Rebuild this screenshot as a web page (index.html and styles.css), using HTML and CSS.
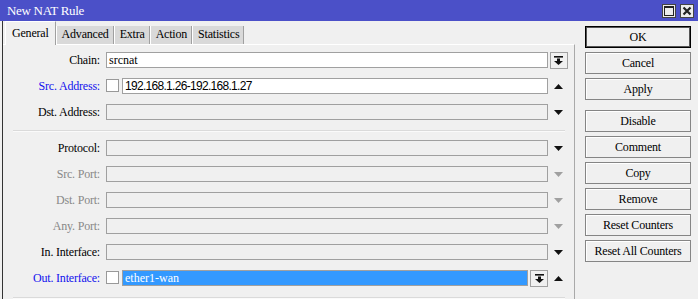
FILE: index.html
```html
<!DOCTYPE html>
<html lang="en">
<head>
  <meta charset="UTF-8" />
  <title>New NAT Rule</title>
  <link rel="stylesheet" href="styles.css">
</head>
<body>
  <div class="window">
    <div class="titlebar">
      <span class="title">New NAT Rule</span>
      <div class="win-btns">
        <span class="wbtn"><svg width="10" height="10" viewBox="0 0 10 10"><rect x="0.5" y="0.5" width="9" height="9" fill="none" stroke="#222" stroke-width="1"/><rect x="0" y="0" width="10" height="2" fill="#222"/></svg></span>
        <span class="wbtn"><svg width="10" height="10" viewBox="0 0 10 10"><path d="M1.5 1.5 L8.5 8.5 M8.5 1.5 L1.5 8.5" stroke="#222" stroke-width="2.2"/></svg></span>
      </div>
    </div>

    <div class="content">
      <div class="main">
        <div class="tabs">
          <span class="tab active">General</span>
          <span class="tab">Advanced</span>
          <span class="tab">Extra</span>
          <span class="tab">Action</span>
          <span class="tab">Statistics</span>
        </div>

        <div class="panel">
          <div class="row">
            <label class="lbl">Chain:</label>
            <div class="field"><div class="input on">srcnat</div></div>
            <div class="arrow"><span class="dd-btn big"><svg width="9" height="9" viewBox="0 0 9 9"><rect x="0" y="0" width="9" height="1.6" fill="#111"/><rect x="3" y="2.5" width="3" height="2.5" fill="#111"/><polygon points="0,5 9,5 4.5,9" fill="#111"/></svg></span></div>
          </div>
          <div class="row">
            <label class="lbl blue">Src. Address:</label>
            <div class="field"><span class="check"></span><div class="input on sans">192.168.1.26-192.168.1.27</div></div>
            <div class="arrow"><svg width="9" height="5" viewBox="0 0 9 5"><polygon points="0,5 4.5,0 9,5" fill="#111"/></svg></div>
          </div>
          <div class="row">
            <label class="lbl">Dst. Address:</label>
            <div class="field"><div class="input"></div></div>
            <div class="arrow"><svg width="9" height="5" viewBox="0 0 9 5"><polygon points="0,0 9,0 4.5,5" fill="#111"/></svg></div>
          </div>

          <div class="sep first"></div>

          <div class="row">
            <label class="lbl">Protocol:</label>
            <div class="field"><div class="input"></div></div>
            <div class="arrow"><svg width="9" height="5" viewBox="0 0 9 5"><polygon points="0,0 9,0 4.5,5" fill="#111"/></svg></div>
          </div>
          <div class="row">
            <label class="lbl gray">Src. Port:</label>
            <div class="field"><div class="input"></div></div>
            <div class="arrow"><svg width="9" height="5" viewBox="0 0 9 5"><polygon points="0,0 9,0 4.5,5" fill="#a0a0a0"/></svg></div>
          </div>
          <div class="row">
            <label class="lbl gray">Dst. Port:</label>
            <div class="field"><div class="input"></div></div>
            <div class="arrow"><svg width="9" height="5" viewBox="0 0 9 5"><polygon points="0,0 9,0 4.5,5" fill="#a0a0a0"/></svg></div>
          </div>
          <div class="row">
            <label class="lbl gray">Any. Port:</label>
            <div class="field"><div class="input"></div></div>
            <div class="arrow"><svg width="9" height="5" viewBox="0 0 9 5"><polygon points="0,0 9,0 4.5,5" fill="#a0a0a0"/></svg></div>
          </div>
          <div class="row">
            <label class="lbl">In. Interface:</label>
            <div class="field"><div class="input"></div></div>
            <div class="arrow"><svg width="9" height="5" viewBox="0 0 9 5"><polygon points="0,0 9,0 4.5,5" fill="#111"/></svg></div>
          </div>
          <div class="row">
            <label class="lbl blue">Out. Interface:</label>
            <div class="field">
              <span class="check"></span>
              <div class="input selected">ether1-wan</div>
              <span class="dd-btn"><svg width="9" height="9" viewBox="0 0 9 9"><rect x="0" y="0" width="9" height="1.6" fill="#111"/><rect x="3" y="2.5" width="3" height="2.5" fill="#111"/><polygon points="0,5 9,5 4.5,9" fill="#111"/></svg></span>
            </div>
            <div class="arrow"><svg width="9" height="5" viewBox="0 0 9 5"><polygon points="0,5 4.5,0 9,5" fill="#111"/></svg></div>
          </div>

          <div class="sep last"></div>
        </div>
      </div>

      <div class="actions">
        <button class="btn default">OK</button>
        <button class="btn">Cancel</button>
        <button class="btn">Apply</button>
        <button class="btn spaced">Disable</button>
        <button class="btn">Comment</button>
        <button class="btn">Copy</button>
        <button class="btn">Remove</button>
        <button class="btn">Reset Counters</button>
        <button class="btn">Reset All Counters</button>
      </div>
    </div>
  </div>
</body>
</html>
```

FILE: styles.css
```css
* { box-sizing: border-box; }
body { margin: 0; background: #f0f0f0; font-family: "Liberation Serif", serif; font-size: 12px; color: #000; }
.window { width: 698px; height: 299px; overflow: hidden; }

.titlebar { height: 21px; background: #4b50c8; display: flex; align-items: center; justify-content: space-between; padding: 0 4px 0 7px; }
.title { color: #fff; font-size: 13px; letter-spacing: -0.3px; }
.win-btns { display: flex; gap: 4px; margin-top: 1px; }
.wbtn { width: 14px; height: 14px; background: #ececec; border: 1px solid #444; display: flex; align-items: center; justify-content: center; }

.content { display: flex; height: 278px; margin-left: 2px; border-left: 1px solid #333; }
.main { width: 572px; display: flex; flex-direction: column; }

.tabs { display: flex; align-items: flex-end; height: 23px; padding-left: 2px; }
.tab { height: 18px; line-height: 17px; padding: 0 4px 0 5px; background: #d9d9d9; border-left: 1px solid #fff; border-right: 1px solid #a0a0a0; letter-spacing: -0.2px; }
.tab.active { height: 24px; margin-bottom: -1px; line-height: 22px; background: #f0f0f0; border-top: 1px solid #fff; padding: 0 6px; position: relative; }

.panel { flex: 1; border-top: 1px solid #fff; border-right: 1px solid #a9a9a9; padding-top: 7px; }

.row { display: flex; height: 26px; align-items: flex-start; }
.lbl { width: 97px; margin-right: 6px; text-align: right; line-height: 16px; letter-spacing: -0.2px; }
.lbl.blue { color: #1212ee; }
.lbl.gray { color: #888; }

.field { width: 442px; display: flex; align-items: flex-start; }
.input { flex: 1; height: 16px; border: 1px solid #a0a0a0; background: #f0f0f0; line-height: 14px; padding-left: 2px; white-space: nowrap; overflow: hidden; }
.input.on { background: #fff; }
.input.sans { font-family: "Liberation Sans", sans-serif; font-size: 12px; letter-spacing: -0.7px; }
.input.selected { background: #3399ff; color: #fff; }

.check { width: 13px; height: 13px; margin: 1px 2px 0 0; border: 1px solid #999; background: #fff; flex: none; }
.field .check + .input { margin-left: 1px; }

.dd-btn { width: 18px; height: 17px; margin-left: 2px; border: 1px solid #a0a0a0; background: #f0f0f0; display: flex; align-items: center; justify-content: center; flex: none; }
.dd-btn.big { margin-left: 1px; }

.arrow { width: 20px; height: 16px; display: flex; align-items: center; justify-content: center; }

.sep { margin: 0 9px 0 10px; border-top: 1px solid #dadada; border-bottom: 1px solid #fafafa; }
.sep.first { margin-bottom: 8px; }
.sep.last { margin-top: 1px; }

.actions { flex: 1; display: flex; flex-direction: column; gap: 4px; padding: 5px 0 0 10px; }
.btn { width: 106px; height: 22px; padding: 0; font-family: "Liberation Serif", serif; font-size: 12px; letter-spacing: -0.2px; background: #f0f0f0; border: 1px solid #858585; box-shadow: inset 1px 1px 0 #fff; color: #000; }
.btn.default { border: 1px solid #000; box-shadow: inset 0 0 0 1px #555; }
.btn.spaced { margin-top: 6px; }
```
